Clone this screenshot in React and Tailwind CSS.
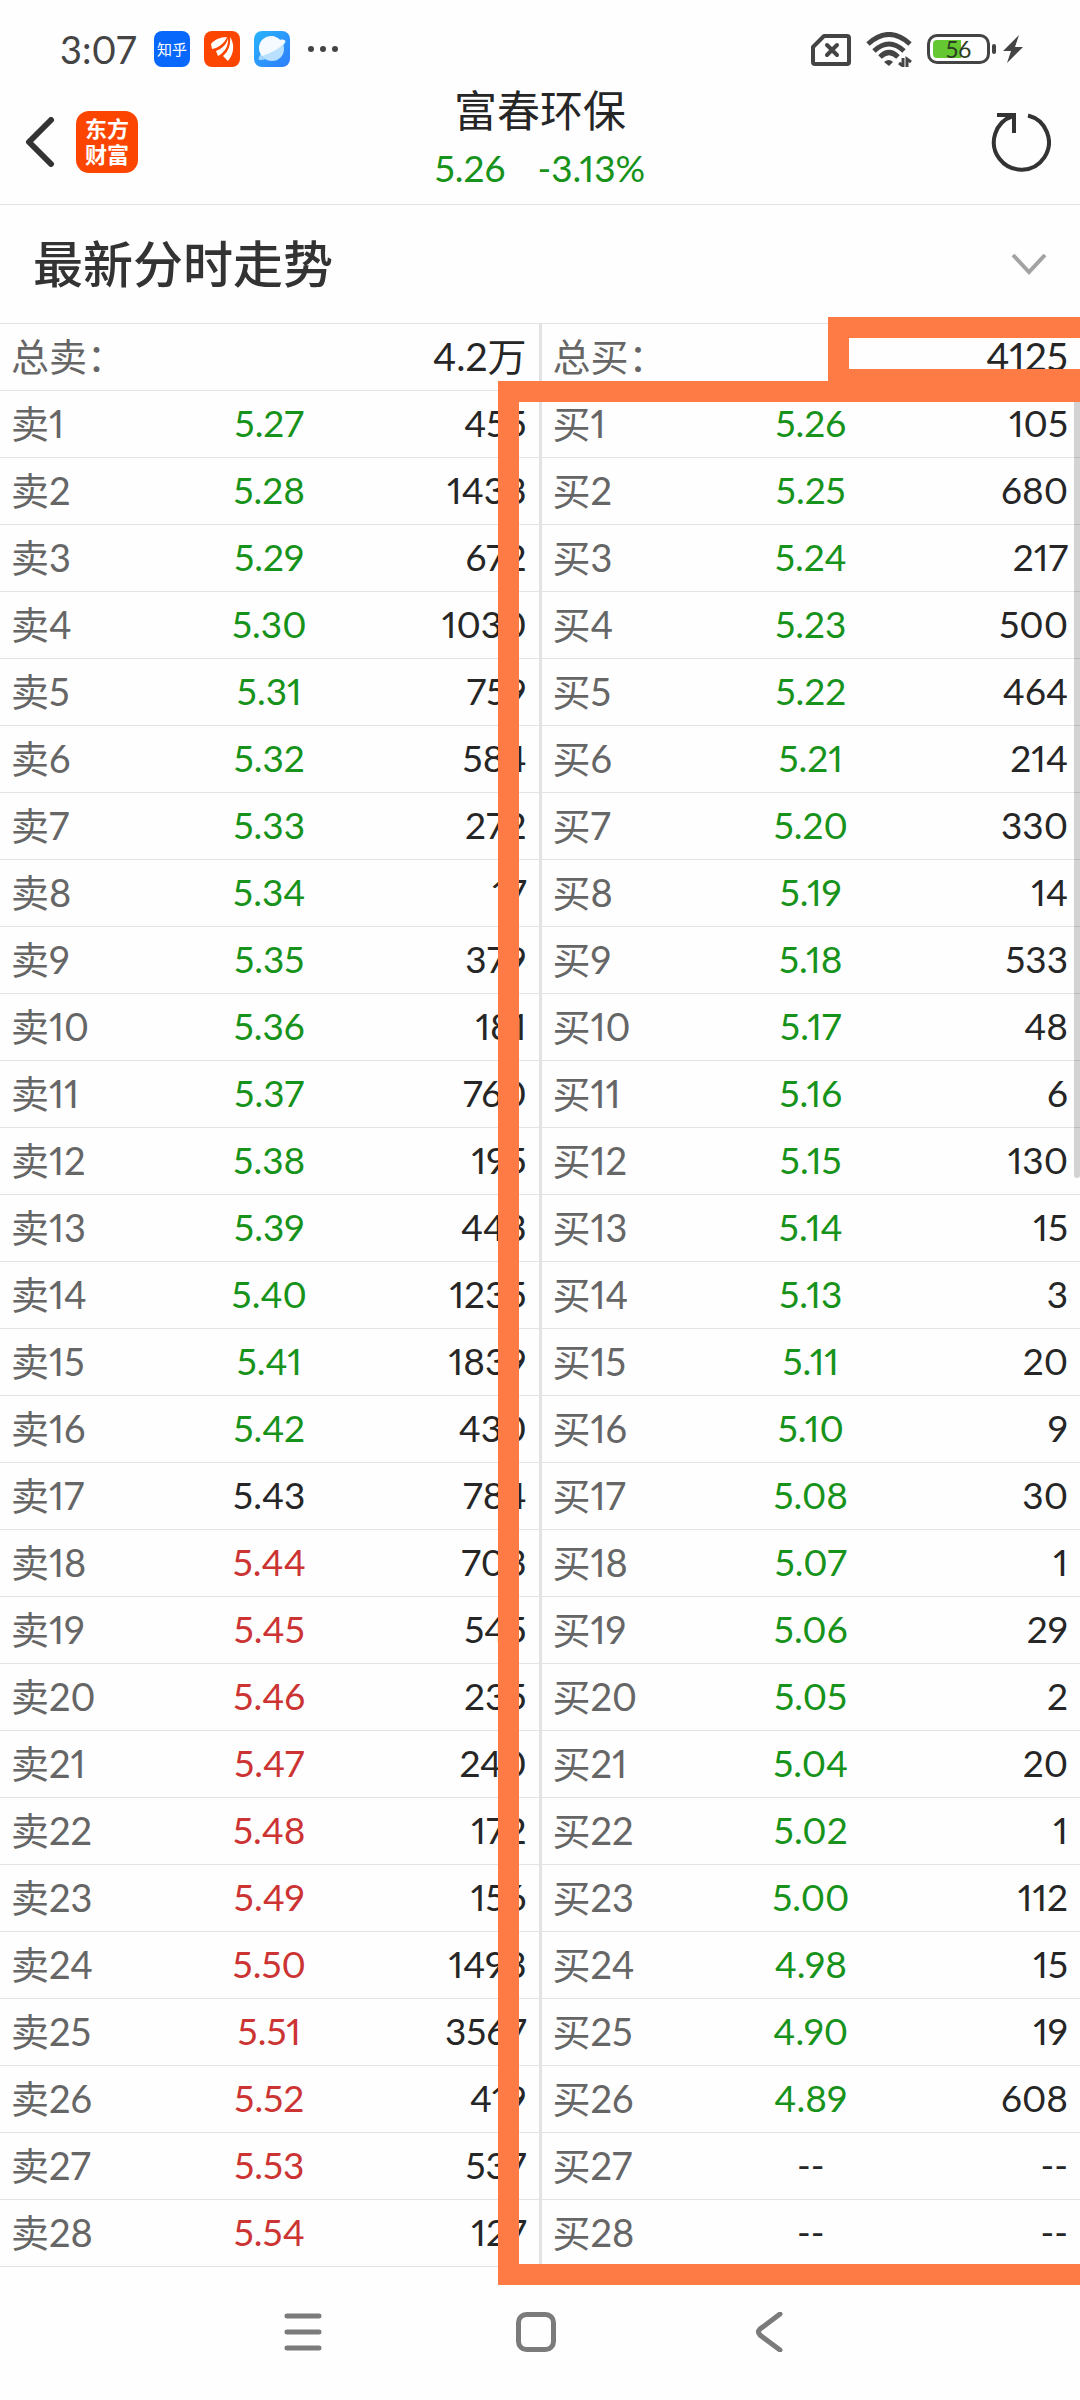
const sells = [
  ["5.27", "455"], ["5.28", "1433"], ["5.29", "672"], ["5.30", "1030"],
  ["5.31", "759"], ["5.32", "584"], ["5.33", "272"], ["5.34", "17"],
  ["5.35", "379"], ["5.36", "181"], ["5.37", "760"], ["5.38", "195"],
  ["5.39", "443"], ["5.40", "1235"], ["5.41", "1839"], ["5.42", "430"],
  ["5.43", "784"], ["5.44", "703"], ["5.45", "545"], ["5.46", "235"],
  ["5.47", "240"], ["5.48", "172"], ["5.49", "156"], ["5.50", "1493"],
  ["5.51", "3567"], ["5.52", "419"], ["5.53", "537"], ["5.54", "127"],
];

const buys = [
  ["5.26", "105"], ["5.25", "680"], ["5.24", "217"], ["5.23", "500"],
  ["5.22", "464"], ["5.21", "214"], ["5.20", "330"], ["5.19", "14"],
  ["5.18", "533"], ["5.17", "48"], ["5.16", "6"], ["5.15", "130"],
  ["5.14", "15"], ["5.13", "3"], ["5.11", "20"], ["5.10", "9"],
  ["5.08", "30"], ["5.07", "1"], ["5.06", "29"], ["5.05", "2"],
  ["5.04", "20"], ["5.02", "1"], ["5.00", "112"], ["4.98", "15"],
  ["4.90", "19"], ["4.89", "608"], ["--", "--"], ["--", "--"],
];

const PREV_CLOSE = 5.43;

// green below the previous close, red above it
function priceColor(price) {
  const value = parseFloat(price);
  if (value < PREV_CLOSE) return "text-[#17921a]";
  if (value > PREV_CLOSE) return "text-[#cc3433]";
  return "text-[#262626]";
}

function StatusBar() {
  return (
    <div className="flex h-20 items-center justify-between pt-[18px] pl-[60px] pr-[57px] text-[#444]">
      <div className="flex items-center gap-[14px]">
        <span className="w-20 text-[38px] leading-none">3:07</span>
        <span className="flex size-9 items-center justify-center rounded-lg bg-[#0868fb] text-[15px] leading-none text-white">
          知乎
        </span>
        <svg viewBox="0 0 36 36" className="size-9">
          <rect width="36" height="36" rx="8" fill="#fd4502" />
          <path d="M23 6C16 6 10 9 7 13L8 18C14 17 20 13 23 6Z" fill="#fff" />
          <path d="M24 7C23 13 18 18 12 20L14 25C20 22 25 15 24 7Z" fill="#fff" />
          <path d="M26 6C27 14 24 21 19 25L24 30C30 23 31 13 26 6Z" fill="#fff" />
        </svg>
        <svg viewBox="0 0 36 36" className="size-9">
          <defs>
            <linearGradient id="sky" x1="0" y1="0" x2="1" y2="1">
              <stop offset="0" stopColor="#28b4fd" />
              <stop offset="1" stopColor="#2f7dfb" />
            </linearGradient>
          </defs>
          <rect width="36" height="36" rx="8" fill="url(#sky)" />
          <path d="M5 29C4 27 5 25 8 22L28 10C31 9 33 10 31 12C27 20 13 30 5 29Z" fill="#9fd5fe" />
          <circle cx="18" cy="18" r="12" fill="#b9e0ff" />
          <path d="M8 25A12 12 0 0 1 26 9C29 8 32 9 31 11C27 17 17 22 8 25Z" fill="#f4faff" />
        </svg>
        <svg viewBox="0 0 32 8" className="ml-[3px] h-2 w-8" fill="currentColor">
          <circle cx="4" cy="4" r="3" />
          <circle cx="16" cy="4" r="3" />
          <circle cx="28" cy="4" r="3" />
        </svg>
      </div>

      <div className="flex items-center">
        <svg viewBox="0 0 40 32" className="mr-[15px] mt-[2px] h-8 w-10" fill="none" stroke="currentColor">
          <path d="M13 2H36Q38 2 38 4V28Q38 30 36 30H4Q2 30 2 28V13Z" strokeWidth="4" strokeLinejoin="round" />
          <path d="M16 11L26 21M26 11L16 21" strokeWidth="4" strokeLinecap="round" />
        </svg>
        <svg viewBox="0 0 46 35" className="mr-[15px] h-[35px] w-[46px]" fill="none" stroke="currentColor">
          <path d="M2 12Q23 -7 44 12" strokeWidth="5" />
          <path d="M8 19Q23 5 38 19" strokeWidth="5" />
          <path d="M14 25Q23 16 32 25" strokeWidth="5" />
          <path d="M18 30Q23 26 27 30L23 34Z" fill="currentColor" stroke="none" />
          <path d="M37 26V34L33 31M41 35V27L45 30" strokeWidth="3" />
        </svg>
        <div className="relative flex h-[30px] w-[63px] items-center justify-center rounded-[10px] border-[3px] border-current">
          <span className="absolute top-[3px] left-[3px] h-[18px] w-[28px] rounded-l-[4px] bg-[#65c732]" />
          <span className="relative text-[23px] leading-none text-[#2c3d22]">56</span>
        </div>
        <span className="ml-[2px] h-[10px] w-1 rounded-xs bg-[#444]" />
        <svg viewBox="0 0 20 28" className="ml-[7px] h-7 w-5" fill="currentColor">
          <path d="M16 0L0 16H8L4 28L20 12H12Z" />
        </svg>
      </div>
    </div>
  );
}

function Header() {
  return (
    <header className="flex items-center justify-between border-b border-[#e3e3e3] h-[125px] px-[25px]">
      <div className="flex flex-1 items-center gap-[21px]">
        <button aria-label="返回">
          <svg viewBox="0 0 30 50" className="h-[50px] w-[30px]" fill="none" stroke="#333" strokeWidth="6" strokeLinecap="round" strokeLinejoin="round">
            <path d="M26 3L4 25L26 47" />
          </svg>
        </button>
        <a href="#home" className="flex size-[62px] flex-col items-center justify-center rounded-[13px] bg-[#fd4502] text-[22px] leading-[26px] font-bold text-white">
          <span>东方</span>
          <span>财富</span>
        </a>
      </div>
      <div className="flex flex-col items-center pb-[6px]">
        <h1 className="text-[43px] leading-[58px] text-[#262626]">富春环保</h1>
        <p className="flex gap-[32px] text-[37px] leading-[56px] text-[#17921a]">
          <span>5.26</span>
          <span>-3.13%</span>
        </p>
      </div>
      <div className="flex flex-1 justify-end">
        <button aria-label="刷新" className="mr-1">
          <svg viewBox="0 0 60 60" className="size-[60px]" fill="none" stroke="#333" strokeWidth="4">
            <path d="M37 3.5A27.5 27.5 0 1 1 22 4" />
            <path d="M6 3H23V21" />
          </svg>
        </button>
      </div>
    </header>
  );
}

function Panel({ side, total, rows }) {
  return (
    <table className="w-full table-fixed border-separate border-spacing-0 text-[37px] leading-none text-[#262626]">
      <thead>
        <tr>
          <th scope="row" className="h-[67px] border-b border-[#e3e3e3] pb-[2px] pl-[11px] text-left text-[38px] font-normal text-[#666]">
            总{side}：
          </th>
          <td className="border-b border-[#e3e3e3]" />
          <td className="border-b border-[#e3e3e3] pr-3 pb-[2px] text-right text-[39px]">{total}</td>
        </tr>
      </thead>
      <tbody>
        {rows.map(([price, volume], i) => (
          <tr key={i}>
            <th scope="row" className="h-[67px] border-b border-[#e3e3e3] pb-[2px] pl-[11px] text-left text-[38px] font-normal text-[#666]">
              {side}
              {i + 1}
            </th>
            <td className={`border-b border-[#e3e3e3] pb-[3px] text-center ${priceColor(price)}`}>{price}</td>
            <td className="border-b border-[#e3e3e3] pr-3 pb-[3px] text-right">{volume}</td>
          </tr>
        ))}
      </tbody>
    </table>
  );
}

function NavBar() {
  return (
    <nav className="flex h-[130px] items-center justify-center gap-[193px] pr-2 text-[#7b7b7b]">
      <button aria-label="菜单">
        <svg viewBox="0 0 40 40" className="size-10" fill="none" stroke="currentColor" strokeWidth="5" strokeLinecap="round">
          <path d="M4 4H36M4 20H36M4 36H36" />
        </svg>
      </button>
      <button aria-label="主页">
        <svg viewBox="0 0 40 40" className="size-10" fill="none" stroke="currentColor" strokeWidth="5">
          <rect x="2.5" y="2.5" width="35" height="35" rx="8" />
        </svg>
      </button>
      <button aria-label="返回">
        <svg viewBox="0 0 40 40" className="size-10" fill="none" stroke="currentColor" strokeWidth="5" strokeLinecap="round">
          <path d="M31 2L11 17Q8 20 11 23L31 38" />
        </svg>
      </button>
    </nav>
  );
}

function App() {
  return (
    <div className="min-h-screen overflow-x-hidden bg-[#fefefe] font-[Lato,'Noto_Sans_CJK_SC',sans-serif] proportional-nums">
      <StatusBar />
      <Header />
      <main>
        <div className="flex h-[119px] items-center justify-between border-b border-[#e3e3e3] px-[33px]">
          <h2 className="text-[50px] leading-none font-medium text-[#333]">最新分时走势</h2>
          <button aria-label="展开">
            <svg viewBox="0 0 36 22" className="h-[22px] w-9" fill="none" stroke="#a3a3a3" strokeWidth="4">
              <path d="M2 2L18 19L34 2" />
            </svg>
          </button>
        </div>

        <div className="relative flex">
          <div className="flex-1">
            <Panel side="卖" total="4.2万" rows={sells} />
          </div>
          <div className="w-[3px] bg-[#e3e3e3]" />
          <div className="flex-1">
            <Panel side="买" total="4125" rows={buys} />
          </div>

          {/* scroll thumb */}
          <div className="absolute top-[67px] right-0 h-[787px] w-[6px] rounded-b-full bg-black/17" />
          {/* hand-drawn highlight boxes */}
          <div className="absolute top-[57px] right-0 -bottom-[18px] left-[calc(50%-42px)] border-[21px] border-r-0 border-[#ff7b45]" />
          <div className="absolute -top-[7px] right-0 h-[73px] w-[252px] border-[21px] border-r-0 border-[#ff7b45]" />
        </div>
      </main>
      <NavBar />
    </div>
  );
}

export default App;
